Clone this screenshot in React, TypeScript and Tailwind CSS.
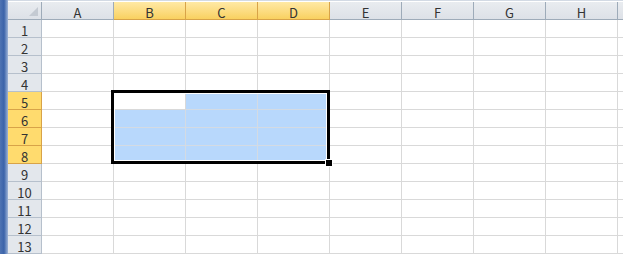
import React from "react";

const cols = ["A", "B", "C", "D", "E", "F", "G", "H", "I"];
const rows = Array.from({ length: 13 }, (_, i) => i + 1);

const selCols = ["B", "C", "D"];
const selRows = [5, 6, 7, 8];

function isFilled(c: string, r: number) {
  if (!selCols.includes(c) || !selRows.includes(r)) return false;
  return !(c === "B" && r === 5);
}

export default function App() {
  return (
    <div
      className="flex w-[623px] h-[254px] overflow-hidden bg-white text-[#333]"
      style={{ fontFamily: '"Noto Sans CJK JP", "DejaVu Sans", sans-serif' }}
    >
      {/* left window edge */}
      <div className="w-[8px] h-full shrink-0 bg-gradient-to-r from-[#4f74b3] via-[#3b63a9] to-[#9fb4d6]" />

      <div className="flex flex-col flex-1 min-w-0">
        <div className="h-[3px] bg-[#d3dae4]" />
        <div className="h-px bg-white" />
        <div className="h-px bg-[#a9b5c3]" />

        <div className="relative">
          {/* column headers */}
          <div className="flex h-[18px]">
            <div className="relative w-[34px] shrink-0 border-r border-b border-[#9eabb9] bg-gradient-to-b from-[#e9ecf0] to-[#dde1e7]">
              <div className="absolute right-[3px] bottom-[3px] w-0 h-0 border-l-[9px] border-l-transparent border-b-[9px] border-b-[#c4cad2]" />
            </div>
            {cols.map((c) => {
              const sel = selCols.includes(c);
              return (
                <div
                  key={c}
                  className={
                    sel
                      ? "w-[72px] shrink-0 flex items-center justify-center pt-[3px] text-[13px] leading-none border-r border-b border-[#d8a348] bg-gradient-to-b from-[#ffe9a4] to-[#f9d15f]"
                      : "w-[72px] shrink-0 flex items-center justify-center pt-[3px] text-[13px] leading-none border-r border-b border-[#9eabb9] bg-gradient-to-b from-[#e9ecf0] to-[#dde1e7]"
                  }
                >
                  {c === "I" ? "" : c}
                </div>
              );
            })}
          </div>

          {/* rows */}
          {rows.map((r) => {
            const sel = selRows.includes(r);
            return (
              <div key={r} className="flex h-[18px]">
                <div
                  className={
                    sel
                      ? "w-[34px] shrink-0 flex items-center justify-center pt-[3px] text-[13px] leading-none border-r border-b border-[#d8a348] bg-[#ffdb6e]"
                      : "w-[34px] shrink-0 flex items-center justify-center pt-[3px] text-[13px] leading-none border-r border-b border-[#b6c0cc] bg-[#e3e7ec]"
                  }
                >
                  {r}
                </div>
                {cols.map((c) => (
                  <div
                    key={c}
                    className={
                      isFilled(c, r)
                        ? "w-[72px] shrink-0 border-r border-b border-[#d4dbe3] bg-[#b8d8fc]"
                        : "w-[72px] shrink-0 border-r border-b border-[#d9d9d9] bg-white"
                    }
                  />
                ))}
              </div>
            );
          })}

          {/* selection frame B5:D8 */}
          <div className="absolute left-[103px] top-[88px] w-[219px] h-[74px] border-[3px] border-black">
            <div className="w-full h-full border border-white" />
          </div>
          {/* fill handle */}
          <div className="absolute left-[318px] top-[158px] w-[6px] h-[6px] bg-black outline outline-1 outline-white" />
        </div>
      </div>
    </div>
  );
}
